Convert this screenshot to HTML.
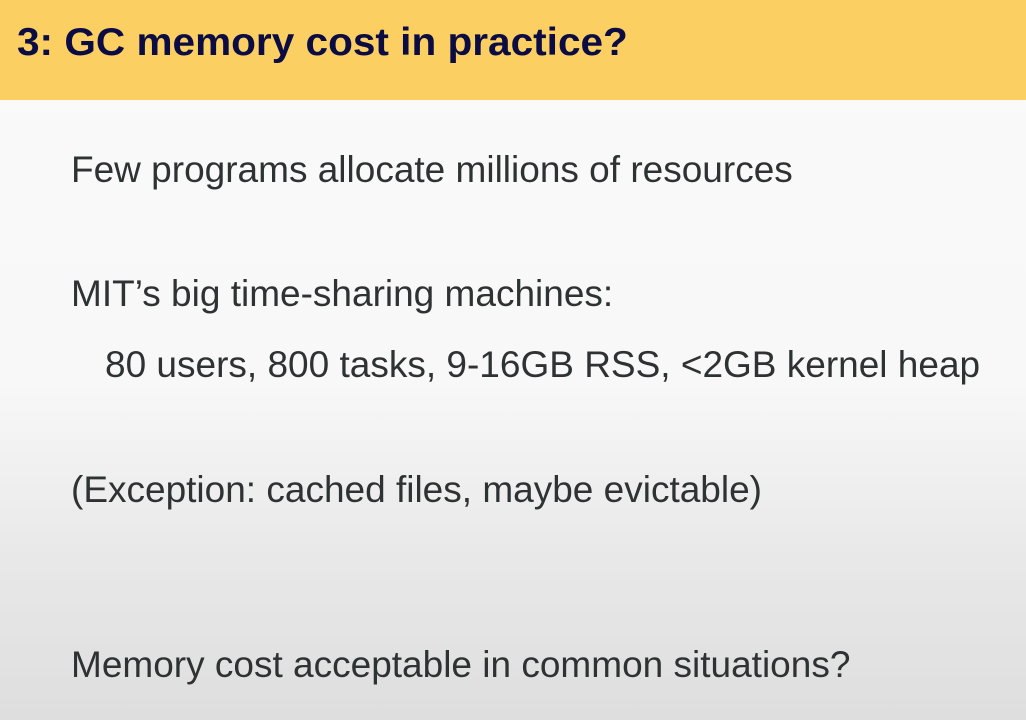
<!DOCTYPE html>
<html><head><meta charset="utf-8"><style>
html,body{margin:0;padding:0}
body{width:1026px;height:720px;overflow:hidden;position:relative;background:linear-gradient(#fafafa 0px,#f8f8f8 380px,#e8e8e8 560px,#dedede 720px);font-family:"Liberation Sans",Arial,sans-serif}
.hd{position:absolute;left:0;top:0;width:1026px;height:100px;background:#fccf62}
.t{position:absolute;white-space:nowrap;line-height:1}
.title{left:17px;top:23px;font-size:39px;font-weight:bold;color:#0c0c44;transform:scaleX(1.04);transform-origin:0 0}
.b{font-size:37px;color:#2e3233}
</style></head><body>
<div class="hd"></div>
<div class="t title">3: GC memory cost in practice?</div>
<div class="t b" style="left:71px;top:151px">Few programs allocate millions of resources</div>
<div class="t b" style="left:71px;top:275px">MIT’s big time-sharing machines:</div>
<div class="t b" style="left:105px;top:346px">80 users, 800 tasks, 9-16GB RSS, &lt;2GB kernel heap</div>
<div class="t b" style="left:71px;top:471px">(Exception: cached files, maybe evictable)</div>
<div class="t b" style="left:71px;top:646px">Memory cost acceptable in common situations?</div>
</body></html>
